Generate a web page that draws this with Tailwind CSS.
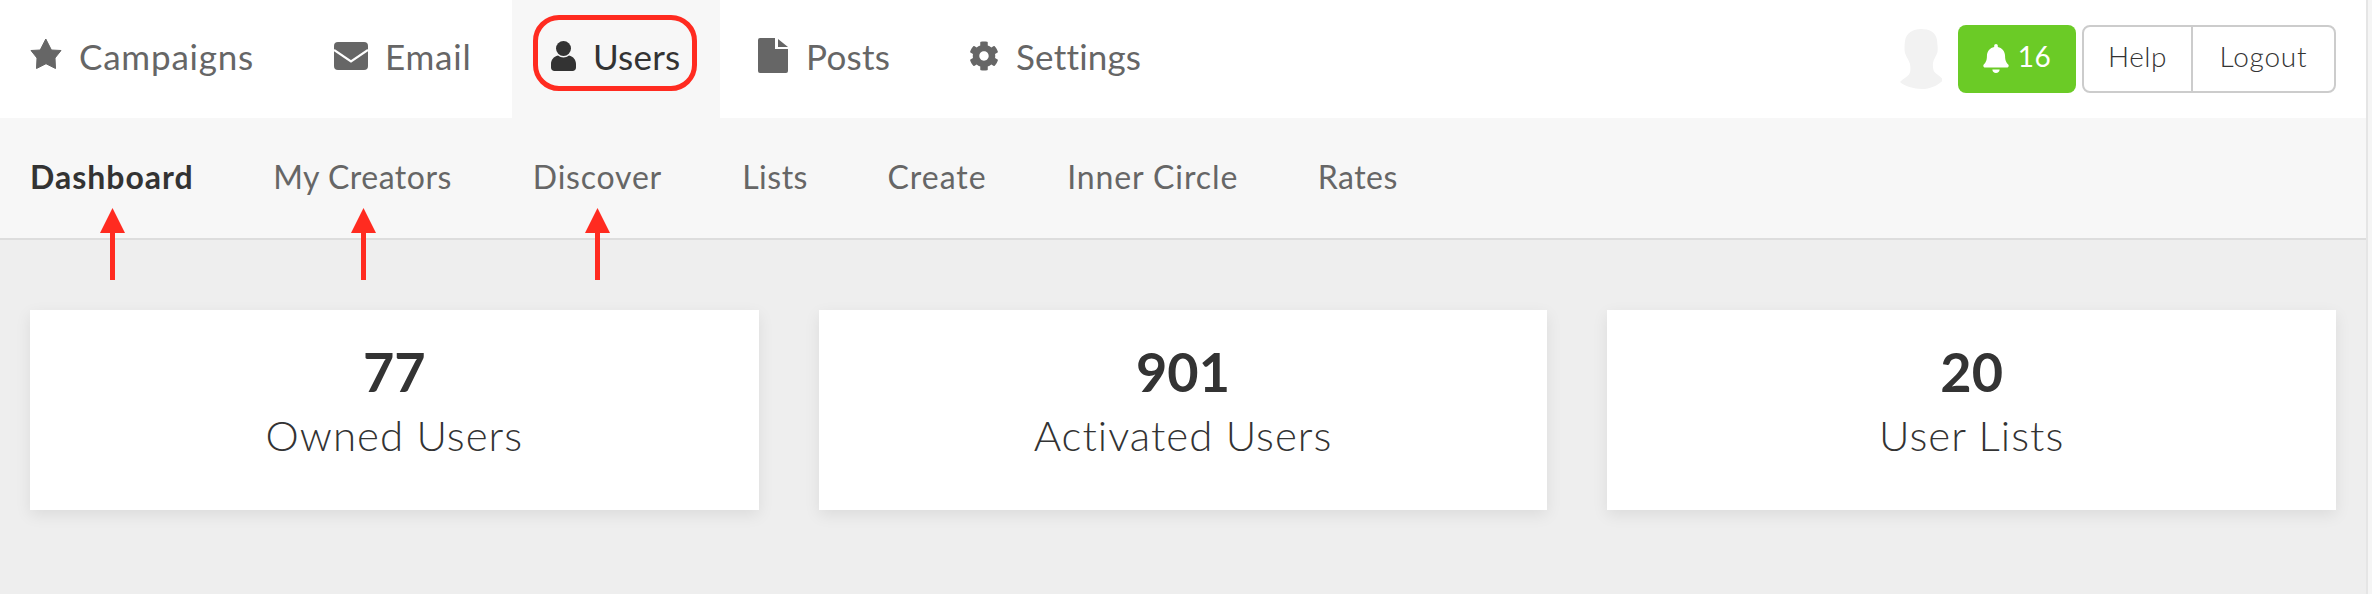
<!DOCTYPE html>
<html lang="en">
<head>
    <meta charset="UTF-8">
    <title>Users Dashboard</title>
    <script src="https://cdn.jsdelivr.net/npm/@tailwindcss/browser@4"></script>
</head>
<body class="bg-[#f5f5f5] font-['Lato','Noto_Sans',sans-serif]">
<div class="relative h-[594px] w-[2372px] overflow-hidden flex">
    <div class="w-[2366px] shrink-0 bg-[#eeeeee]">
        <!-- Top nav -->
        <div class="h-[118px] bg-white flex items-center text-[35px] tracking-[0.8px] text-[#666666]">
            <div class="flex h-full items-center pl-[30px]">
                <a class="flex items-center h-full w-[265px] pb-[6px]">
                    <svg class="w-[32px] h-[32px] mr-[17px] mb-[4px]" viewBox="0 0 32 32" fill="#666666" stroke="#666666" stroke-width="1" stroke-linejoin="round"><path d="M15.800 1L21.400 12 31 12.500 25 20 25.500 30.500 16 25.700 6.500 30.500 7 20 1 12.500 10.200 12z"/></svg>
                    <span>Campaigns</span>
                </a>
                <a class="flex items-center h-full pl-[39px] w-[217px] pb-[6px]">
                    <svg class="w-[34px] h-[28px] mr-[17px]" viewBox="0 0 34 28"><rect width="34" height="28" rx="4" fill="#666666"/><path d="M0 8l17 11.500L34 8" fill="none" stroke="#ffffff" stroke-width="2.200"/></svg>
                    <span>Email</span>
                </a>
                <a class="flex items-center h-full w-[208px] pl-[39px] pb-[6px] bg-[#f7f7f7] text-[#333333] tracking-[0.2px]">
                    <svg class="w-[25px] h-[30px] mr-[17px]" viewBox="0 0 25 30" fill="#333333"><circle cx="12.500" cy="7.500" r="7.500"/><path d="M7 14.500c3 2.600 8 2.600 11 0 4.500 1 7 4.500 7 8.500v3.500c0 2-1.500 3.500-3.500 3.500h-18c-2 0-3.500-1.500-3.500-3.500V23c0-4 2.500-7.500 7-8.500z"/></svg>
                    <span>Users</span>
                </a>
                <a class="flex items-center h-full pl-[38px] w-[211px] pb-[6px] tracking-[0.3px]">
                    <svg class="w-[30px] h-[35px] mr-[18px] mb-[2px]" viewBox="0 0 30 35" fill="#666666"><path d="M2 0h15v11h13v22a2 2 0 0 1-2 2H2a2 2 0 0 1-2-2V2a2 2 0 0 1 2-2z"/><path d="M20 1l10 8H20z"/></svg>
                    <span>Posts</span>
                </a>
                <a class="flex items-center h-full pl-[38px] pb-[6px] tracking-[0.2px]">
                    <svg class="w-[30px] h-[30px] mr-[17px]" viewBox="0 0 512 512" fill="#666666"><path d="M487.4 315.7l-42.6-24.6c4.3-23.2 4.3-47 0-70.2l42.6-24.6c4.9-2.8 7.1-8.6 5.500-14-11.100-35.600-30-67.800-54.700-94.600-3.800-4.100-10-5.100-14.800-2.300L380.800 110c-17.900-15.400-38.500-27.300-60.800-35.100V25.800c0-5.600-3.900-10.500-9.400-11.700-36.700-8.200-74.300-7.800-109.200 0-5.500 1.200-9.400 6.100-9.400 11.700V75c-22.200 7.900-42.800 19.800-60.800 35.100L88.700 85.500c-4.900-2.800-11-1.900-14.800 2.300-24.700 26.700-43.600 58.900-54.700 94.600-1.700 5.400.6 11.200 5.500 14L67.300 221c-4.300 23.200-4.300 47 0 70.200l-42.600 24.600c-4.900 2.800-7.100 8.600-5.500 14 11.100 35.600 30 67.800 54.700 94.600 3.800 4.100 10 5.100 14.800 2.300l42.600-24.600c17.900 15.400 38.500 27.300 60.800 35.100v49.200c0 5.600 3.900 10.500 9.400 11.700 36.700 8.200 74.300 7.800 109.200 0 5.500-1.200 9.400-6.100 9.400-11.700v-49.200c22.200-7.900 42.800-19.800 60.800-35.100l42.600 24.600c4.900 2.800 11 1.900 14.800-2.300 24.700-26.700 43.600-58.900 54.700-94.600 1.500-5.500-.7-11.300-5.600-14.100zM256 336c-44.100 0-80-35.900-80-80s35.900-80 80-80 80 35.900 80 80-35.900 80-80 80z"/></svg>
                    <span>Settings</span>
                </a>
            </div>
            <div class="ml-auto flex items-center pr-[30px] tracking-[0.5px]">
                <svg class="w-[42px] h-[60px] mr-[16px]" viewBox="0 0 42 60" fill="#f2f2f2"><path d="M21 0c8 0 15 3 16 11 .5 5 1 9 .5 12-1 4-4 7-4.500 11-.3 3 0 7 1.500 9 2 2.500 6 4 8.500 8-4 5-13 9-21 9S4 57 0 53c3-3.500 7-5 9-7.500 2-3 1.500-7 1-10.500-1-4-4-7-5-11-.8-4-.5-8 0-12C6 4 13 0 21 0z"/></svg>
                <a class="flex items-center justify-center w-[118px] h-[68px] pb-[2px] rounded-[8px] bg-[#6bcb26] text-white text-[28px]">
                    <svg class="w-[26px] h-[29px] mr-[9px]" viewBox="0 0 448 512" fill="#ffffff"><path d="M224 512c35.320 0 63.970-28.650 63.970-64H160.030c0 35.350 28.650 64 63.970 64zm215.390-149.710c-19.320-20.760-55.470-51.990-55.470-154.290 0-77.700-54.480-139.900-127.940-155.160V32c0-17.670-14.320-32-31.980-32s-31.980 14.330-31.980 32v20.840C118.560 68.100 64.080 130.300 64.080 208c0 102.300-36.150 133.530-55.470 154.290-6 6.450-8.660 14.160-8.610 21.710.11 16.400 12.980 32 32.100 32h383.800c19.120 0 32-15.600 32.100-32 .05-7.550-2.610-15.270-8.610-21.710z"/></svg>
                    <span class="pb-[4px]">16</span>
                </a>
                <div class="ml-[6px] flex h-[68px] w-[254px] rounded-[8px] border-2 border-[#cccccc] text-[28px] font-light text-[#333333]">
                    <a class="flex items-center justify-center w-[109px] pb-[6px] border-r-2 border-[#cccccc]">Help</a>
                    <a class="flex items-center justify-center flex-1 pb-[6px] tracking-[0.8px]">Logout</a>
                </div>
            </div>
        </div>

        <!-- Sub nav -->
        <div class="h-[122px] pb-[3px] bg-[#f7f7f7] border-b-2 border-[#dddddd] flex items-center gap-[82.500px] pl-[30px] text-[32px] tracking-[0.5px] text-[#666666]">
            <a class="font-bold text-[#333333] tracking-[1px] -mr-[3px]">Dashboard</a>
            <a class="-mr-[1.500px]">My Creators</a>
            <a class="tracking-[0.8px] -mr-[2.400px]">Discover</a>
            <a>Lists</a>
            <a class="tracking-[1px] -ml-[3px]">Create</a>
            <a class="tracking-[0.9px] -ml-[2px] -mr-[3px]">Inner Circle</a>
            <a>Rates</a>
        </div>

        <!-- Stat cards -->
        <div class="grid grid-cols-3 gap-[60px] px-[30px] pt-[70px]">
            <div class="h-[200px] pb-[16px] bg-white shadow-[0_5px_15px_rgba(0,0,0,0.08)] flex flex-col items-center justify-center text-[#333333]">
                <div class="text-[54px] leading-[62px] mb-[4px] font-bold">77</div>
                <div class="text-[42px] leading-[56px] tracking-[1px] font-light">Owned Users</div>
            </div>
            <div class="h-[200px] pb-[16px] bg-white shadow-[0_5px_15px_rgba(0,0,0,0.08)] flex flex-col items-center justify-center text-[#333333]">
                <div class="text-[54px] leading-[62px] mb-[4px] font-bold">901</div>
                <div class="text-[42px] leading-[56px] tracking-[1px] font-light">Activated Users</div>
            </div>
            <div class="h-[200px] pb-[16px] bg-white shadow-[0_5px_15px_rgba(0,0,0,0.08)] flex flex-col items-center justify-center text-[#333333]">
                <div class="text-[54px] leading-[62px] mb-[4px] font-bold">20</div>
                <div class="text-[42px] leading-[56px] tracking-[1px] font-light">User Lists</div>
            </div>
        </div>
    </div>
    <div class="flex-1 border-l-2 border-[#e5e5e5] bg-[#f5f5f5]"></div>

    <!-- Red annotations -->
    <div class="absolute left-[533px] top-[15px] w-[164px] h-[76px] rounded-[26px] border-[5px] border-[#ff2b20]"></div>
    <svg class="absolute left-[100px] top-[208px] w-[25px] h-[72px]" viewBox="0 0 25 72" fill="#ff2b20"><path d="M12.500 0L25 25H15v47h-5V25H0z"/></svg>
    <svg class="absolute left-[351px] top-[208px] w-[25px] h-[72px]" viewBox="0 0 25 72" fill="#ff2b20"><path d="M12.500 0L25 25H15v47h-5V25H0z"/></svg>
    <svg class="absolute left-[585px] top-[208px] w-[25px] h-[72px]" viewBox="0 0 25 72" fill="#ff2b20"><path d="M12.500 0L25 25H15v47h-5V25H0z"/></svg>
</div>
</body>
</html>
